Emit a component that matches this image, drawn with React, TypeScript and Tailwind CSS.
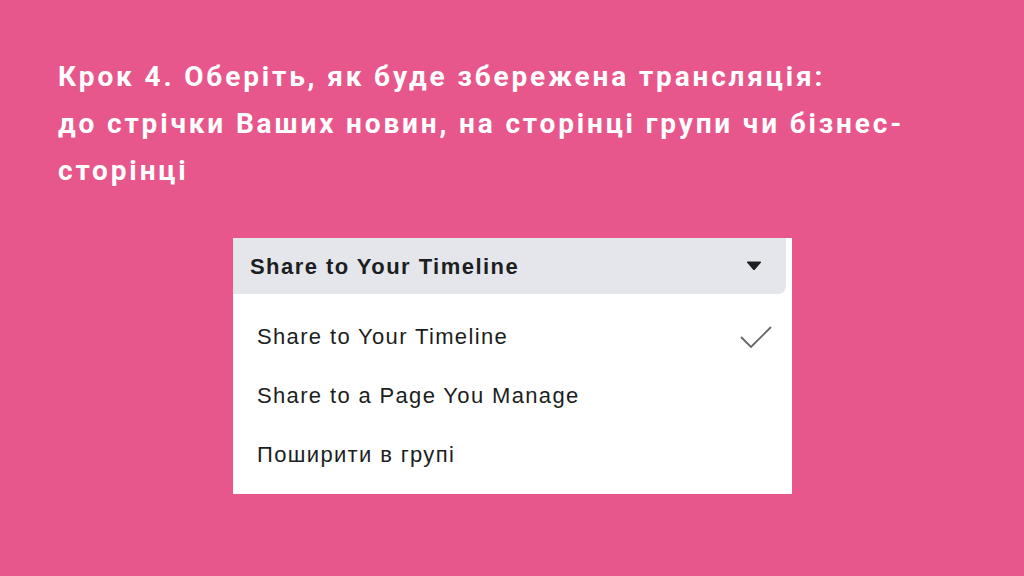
export default function App() {
  return (
    <div className="w-[1024px] h-[576px] bg-[#e8578b] overflow-hidden" style={{ fontFamily: "Roboto, 'Noto Sans', sans-serif" }}>
      <div className="pl-[58px] pt-[53px]">
        <h1 className="text-white font-bold text-[28px] leading-[47px] tracking-[2.85px]">
          Крок 4. Оберіть, як буде збережена трансляція:
          <br />
          до стрічки Ваших новин, на сторінці групи чи бізнес-
          <br />
          сторінці
        </h1>
      </div>
      <div className="ml-[233px] mt-[44px] w-[559px] h-[256px] bg-white" style={{ fontFamily: "'Liberation Sans', Arial, sans-serif" }}>
        <div className="w-[553px] h-[56px] bg-[#e4e6eb] rounded-br-[8px] flex items-center justify-between pl-[17px] pr-[24px]">
          <span className="text-[22px] font-bold text-[#1c1e21] tracking-[1.45px]">Share to Your Timeline</span>
          <svg width="16" height="10" viewBox="0 0 16 10">
            <path d="M1 1.5 Q0.5 0.5 2 0.5 H14 Q15.5 0.5 15 1.5 L9 8.5 Q8 9.5 7 8.5 Z" fill="#1c1e21" />
          </svg>
        </div>
        <div className="flex flex-col pt-[13px] pl-[24px] pr-[20px] text-[#1c1e21] text-[22px] tracking-[1.35px]">
          <div className="h-[59px] flex items-center justify-between">
            <span>Share to Your Timeline</span>
            <svg width="32" height="22" viewBox="0 0 32 22">
              <path d="M1 11 L11 21 L31 1" fill="none" stroke="#65676b" strokeWidth="1.8" />
            </svg>
          </div>
          <div className="h-[59px] flex items-center">
            <span>Share to a Page You Manage</span>
          </div>
          <div className="h-[59px] flex items-center">
            <span>Поширити в групі</span>
          </div>
        </div>
      </div>
    </div>
  );
}
